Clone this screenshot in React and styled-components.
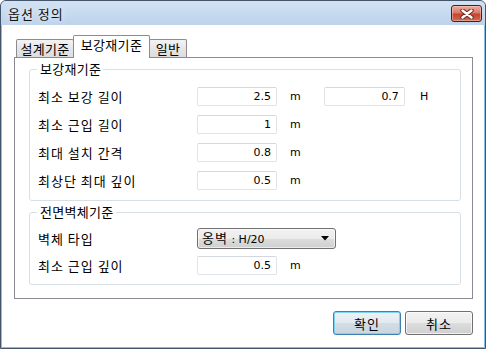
import React from 'react'
import styled, { createGlobalStyle } from 'styled-components'

const GlobalStyle = createGlobalStyle`
  html, body {
    margin: 0;
    padding: 0;
    background: #fff;
  }
  body {
    font-family: "Noto Sans CJK KR", "Noto Sans", sans-serif;
    font-size: 13px;
    letter-spacing: 1px;
    color: #000;
  }
`

const reinforce = [
    { label: '최소 보강 길이', value: '2.5', unit: 'm', extra: { value: '0.7', unit: 'H' } },
    { label: '최소 근입 길이', value: '1', unit: 'm' },
    { label: '최대 설치 간격', value: '0.8', unit: 'm' },
    { label: '최상단 최대 깊이', value: '0.5', unit: 'm' },
]

const tabs = [
    { name: '설계기준', width: 58 },
    { name: '보강재기준', width: 77, active: true },
    { name: '일반', width: 38 },
]

export default function App() {
    return (
        <>
            <GlobalStyle />
            <Window>
                <TitleBar>
                    <Title>옵션 정의</Title>
                    <CloseButton>
                        <svg width="14" height="10" viewBox="0 0 14 10">
                            <path d="M2.5 1.5 L11.5 8.5 M11.5 1.5 L2.5 8.5" stroke="#6b2a22" strokeWidth="4.4" strokeLinecap="round" />
                            <path d="M2.5 1.5 L11.5 8.5 M11.5 1.5 L2.5 8.5" stroke="#ffffff" strokeWidth="2.4" strokeLinecap="round" />
                        </svg>
                    </CloseButton>
                </TitleBar>
                <Client>
                    <TabStrip>
                        {tabs.map(t => (
                            <Tab key={t.name} $active={t.active} $w={t.width}>{t.name}</Tab>
                        ))}
                    </TabStrip>
                    <Panel>
                        <Group>
                            <Legend>보강재기준</Legend>
                            <Fields $top={11} $gap={9} $bottom={10}>
                                {reinforce.map(r => (
                                    <Row key={r.label}>
                                        <Label>{r.label}</Label>
                                        <Input readOnly value={r.value} />
                                        <Unit $pad={13}>{r.unit}</Unit>
                                        {r.extra && <Input readOnly value={r.extra.value} $w={81} />}
                                        {r.extra && <Unit $pad={15}>{r.extra.unit}</Unit>}
                                    </Row>
                                ))}
                            </Fields>
                        </Group>
                        <Group>
                            <Legend>전면벽체기준</Legend>
                            <Fields $top={9} $gap={7} $bottom={9}>
                                <Row>
                                    <Label>벽체 타입</Label>
                                    <Combo>
                                        <ComboText>옹벽<Latin> : H/20</Latin></ComboText>
                                        <svg width="8" height="5" viewBox="0 0 8 5">
                                            <path d="M0 0 H8 L4 4.5 Z" fill="#000" />
                                        </svg>
                                    </Combo>
                                </Row>
                                <Row>
                                    <Label>최소 근입 깊이</Label>
                                    <Input readOnly value="0.5" />
                                    <Unit $pad={13}>m</Unit>
                                </Row>
                            </Fields>
                        </Group>
                    </Panel>
                    <Footer>
                        <Button $default>확인</Button>
                        <Button>취소</Button>
                    </Footer>
                </Client>
            </Window>
        </>
    )
}

const Window = styled.div`
    box-sizing: border-box;
    width: 486px;
    height: 349px;
    display: flex;
    flex-direction: column;
    border: 1px solid #44546a;
    border-radius: 6px 6px 0 0;
    background: #86bde6;
    overflow: hidden;
`

const TitleBar = styled.div`
    height: 24px;
    flex-shrink: 0;
    display: flex;
    align-items: flex-start;
    justify-content: space-between;
    padding: 0 3px 0 7px;
    background: linear-gradient(#d2e2f3, #bcd3eb);
`

const Title = styled.span`
    line-height: 26px;
    color: #111;
    text-shadow: 0 0 6px rgba(255, 255, 255, 0.9);
`

const CloseButton = styled.div`
    box-sizing: border-box;
    width: 31px;
    height: 17px;
    margin-top: 4px;
    display: flex;
    align-items: center;
    justify-content: center;
    border: 1px solid #4a1f1a;
    border-radius: 3px;
    background: linear-gradient(#eeaa9c 0%, #d97b6c 45%, #c6452f 55%, #d16a52 100%);
    box-shadow: inset 0 0 0 1px rgba(255, 220, 210, 0.45);
`

const Client = styled.div`
    flex: 1;
    display: flex;
    flex-direction: column;
    margin: 0 1px 1px 1px;
    padding: 10px 11px 0 12px;
    background: #fff;
`

const TabStrip = styled.div`
    position: relative;
    z-index: 1;
    display: flex;
    align-items: flex-start;
    height: 23px;
    margin-bottom: -1px;
    padding-left: 2px;
`

const Tab = styled.div`
    box-sizing: border-box;
    position: relative;
    width: ${p => p.$w}px;
    height: ${p => (p.$active ? '23px' : '18px')};
    margin-top: ${p => (p.$active ? '0' : '4px')};
    margin-left: ${p => (p.$active ? '-1px' : '0')};
    margin-right: ${p => (p.$active ? '-1px' : '0')};
    z-index: ${p => (p.$active ? 2 : 1)};
    border: 1px solid #898c95;
    border-bottom: none;
    border-radius: 2px 2px 0 0;
    background: ${p => (p.$active ? '#fff' : 'linear-gradient(#f3f3f3, #e6e6e6 50%, #dcdcdc)')};
    text-align: center;
    letter-spacing: 0.3px;
    line-height: ${p => (p.$active ? '18px' : '17px')};
    white-space: nowrap;
`

const Panel = styled.div`
    display: flex;
    flex-direction: column;
    gap: 4px;
    padding: 4px 11px 13px 14px;
    border: 1px solid #898c95;
    background: #fff;
`

const Group = styled.fieldset`
    margin: 0;
    min-width: 0;
    padding: 0 8px;
    border: 1px solid #d5dfe5;
    border-radius: 3px;
`

const Legend = styled.legend`
    padding: 0 2px 0 3px;
    margin-left: -1px;
    letter-spacing: 0.3px;
    line-height: 14px;
`

const Fields = styled.div`
    display: flex;
    flex-direction: column;
    gap: ${p => p.$gap}px;
    padding: ${p => p.$top}px 0 ${p => p.$bottom}px;
`

const Row = styled.div`
    display: flex;
    align-items: center;
`

const Label = styled.span`
    width: 159px;
    flex-shrink: 0;
    line-height: 14px;
`

const Input = styled.input`
    box-sizing: border-box;
    width: ${p => p.$w || 80}px;
    height: 19px;
    margin: 0;
    padding: 0 5px 0 0;
    border: 1px solid #dfe4ea;
    border-top-color: #d3d8de;
    border-radius: 2px;
    background: #fff;
    text-align: right;
    font-family: "DejaVu Sans", "Liberation Sans", sans-serif;
    font-size: 11px;
    letter-spacing: 0;
    color: #000;
    outline: none;
`

const Unit = styled.span`
    width: 52px;
    box-sizing: border-box;
    padding-left: ${p => p.$pad}px;
    font-family: "DejaVu Sans", "Liberation Sans", sans-serif;
    font-size: 11px;
    letter-spacing: 0;
`

const Combo = styled.div`
    box-sizing: border-box;
    width: 139px;
    height: 21px;
    display: flex;
    align-items: center;
    justify-content: space-between;
    padding: 0 6px 0 4px;
    border: 1px solid #707070;
    border-radius: 3px;
    background: linear-gradient(#f2f2f2 0%, #ebebeb 50%, #dddddd 51%, #cfcfcf 100%);
    box-shadow: inset 0 0 0 1px rgba(255, 255, 255, 0.6);
`

const ComboText = styled.span`
    line-height: 14px;
`

const Latin = styled.span`
    font-family: "DejaVu Sans", "Liberation Sans", sans-serif;
    font-size: 11px;
    letter-spacing: 0;
`

const Footer = styled.div`
    display: flex;
    justify-content: flex-end;
    gap: 4px;
    margin-top: 12px;
`

const Button = styled.div`
    box-sizing: border-box;
    width: 68px;
    height: 24px;
    display: flex;
    align-items: center;
    justify-content: center;
    border: 1px solid ${p => (p.$default ? '#3c7fb1' : '#707070')};
    border-radius: 3px;
    background: ${p => (p.$default
        ? 'linear-gradient(#edf2f6 0%, #e2e9ef 50%, #d3dde6 51%, #c9d5df 100%)'
        : 'linear-gradient(#f2f2f2 0%, #ebebeb 50%, #dddddd 51%, #cfcfcf 100%)')};
    box-shadow: inset 0 0 0 1px ${p => (p.$default ? '#7fd3f3' : 'rgba(255, 255, 255, 0.7)')};
`
